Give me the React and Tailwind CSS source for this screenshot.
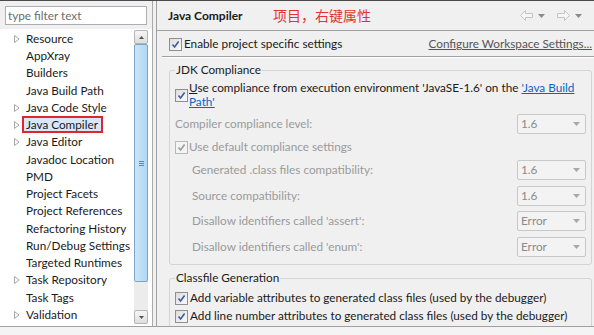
import React from "react";

const FONT = { fontFamily: 'Lato, "Noto Sans CJK SC", sans-serif' };

function Arrow() {
  return (
    <svg width="6" height="8" viewBox="0 0 6 8" className="shrink-0">
      <polygon points="0.5,0.5 5,4 0.5,7.5" fill="#fff" stroke="#a6a6a6" strokeWidth="1" />
    </svg>
  );
}

function Check({ disabled }) {
  return (
    <span
      className={`inline-flex items-center justify-center w-[13px] h-[13px] shrink-0 border ${
        disabled ? "border-[#b8b8b8] bg-[#f4f4f4]" : "border-[#8e8f8f] bg-gradient-to-br from-[#dcdcdc] to-[#fbfbfb]"
      }`}
    >
      <svg width="9" height="9" viewBox="0 0 9 9">
        <path
          d="M1.5 4.5 L3.6 7 L7.6 1.5"
          fill="none"
          stroke={disabled ? "#9a9a9a" : "#3a5ba8"}
          strokeWidth="1.6"
        />
      </svg>
    </span>
  );
}

function Combo({ value }) {
  return (
    <div className="w-[69px] h-[20px] shrink-0 border border-[#c8c8c8] rounded-[2px] bg-[#f3f3f3] flex items-center justify-between pl-[3px] pr-[5px] text-[#8a8a8a]">
      <span>{value}</span>
      <svg width="7" height="4" viewBox="0 0 7 4">
        <polygon points="0,0 7,0 3.5,4" fill="#a8a8a8" />
      </svg>
    </div>
  );
}

const tree = [
  ["Resource", true],
  ["AppXray", false],
  ["Builders", false],
  ["Java Build Path", false],
  ["Java Code Style", true],
  ["Java Compiler", true, true],
  ["Java Editor", true],
  ["Javadoc Location", false],
  ["PMD", false],
  ["Project Facets", false],
  ["Project References", false],
  ["Refactoring History", false],
  ["Run/Debug Settings", false],
  ["Targeted Runtimes", false],
  ["Task Repository", true],
  ["Task Tags", false],
  ["Validation", true],
];

function NavArrow({ dir }) {
  return (
    <svg width="13" height="11" viewBox="0 0 13 11">
      <path
        d={dir === "left" ? "M0.5 5.5 L5.5 0.5 L5.5 3.5 L12.5 3.5 L12.5 7.5 L5.5 7.5 L5.5 10.5 Z" : "M12.5 5.5 L7.5 0.5 L7.5 3.5 L0.5 3.5 L0.5 7.5 L7.5 7.5 L7.5 10.5 Z"}
        fill="#f6f6f6"
        stroke="#c4c4c4"
      />
    </svg>
  );
}

function Drop({ color = "#8a8a8a" }) {
  return (
    <svg width="7" height="4" viewBox="0 0 7 4">
      <polygon points="0,0 7,0 3.5,4" fill={color} />
    </svg>
  );
}

export default function App() {
  return (
    <div
      className="w-[594px] h-[335px] overflow-hidden bg-[#f0f0f0] border-t border-[#4a4a4a] flex flex-col text-[11.75px] text-[#1a1a1a] whitespace-nowrap"
      style={FONT}
    >
      <div className="flex h-[325px] shrink-0">
        {/* Left panel */}
        <div className="w-[153px] border-r border-[#a9a9a9] flex flex-col bg-white">
          <div className="bg-[#f0f0f0] pt-[5px] pl-[5px] pb-[4px] shrink-0">
            <div className="w-[142px] h-[19px] border border-[#abadb3] bg-white flex items-center pl-[2px] text-[#6d6d6d] leading-none">
              type filter text
            </div>
          </div>
          <div className="flex flex-1 bg-white">
            <div className="flex-1 pt-[1px]">
              {tree.map(([name, arrow, sel]) => (
                <div key={name} className="h-[17.25px] flex items-center pl-[14px]">
                  <span className="w-[8px] flex">{arrow ? <Arrow /> : null}</span>
                  {sel ? (
                    <span className="h-[17px] border-2 border-[#e0262b] bg-[#d8e8fa] flex items-center pl-[2px] pr-[3px] leading-none">
                      {name}
                    </span>
                  ) : (
                    <span className="pl-[4px] leading-none">{name}</span>
                  )}
                </div>
              ))}
            </div>
            <div className="w-[14px] mr-[4px] mt-[1px] mb-[2px] bg-[#ececec] flex flex-col">
              <div className="h-[14px] shrink-0 border border-[#b5b5b5] rounded-[2px] bg-gradient-to-b from-[#f6f6f6] to-[#dedede] flex items-center justify-center">
                <svg width="5" height="3" viewBox="0 0 5 3"><polygon points="0,3 5,3 2.5,0" fill="#555" /></svg>
              </div>
              <div className="h-[238px] shrink-0 border border-[#7fa5c6] rounded-[2px] bg-gradient-to-r from-[#c9e5f8] to-[#b0d8f4] flex items-center justify-center">
                <div className="flex flex-col gap-[1px]">
                  <div className="w-[5px] h-[1px] bg-[#5b87ad]" />
                  <div className="w-[5px] h-[1px] bg-[#5b87ad]" />
                  <div className="w-[5px] h-[1px] bg-[#5b87ad]" />
                </div>
              </div>
              <div className="flex-1" />
              <div className="h-[14px] shrink-0 border border-[#b5b5b5] rounded-[2px] bg-gradient-to-b from-[#f6f6f6] to-[#dedede] flex items-center justify-center">
                <svg width="5" height="3" viewBox="0 0 5 3"><polygon points="0,0 5,0 2.5,3" fill="#555" /></svg>
              </div>
            </div>
          </div>
        </div>
        {/* sash */}
        <div className="w-[3px]" />
        {/* Right panel */}
        <div className="flex-1 min-w-0 overflow-hidden border-l border-[#a0a0a0] flex flex-col">
          <div className="h-[30px] shrink-0 border-b border-[#a0a0a0] flex items-center pl-[11px] pr-[2px]">
            <span className="font-bold text-[12px] w-[105px]">Java Compiler</span>
            <span className="text-[14px] text-[#e03434]" style={{ fontFamily: '"Noto Sans CJK SC", sans-serif' }}>
              项目，右键属性
            </span>
            <div className="ml-auto flex items-center gap-[5px]">
              <NavArrow dir="left" />
              <Drop />
              <span className="w-[2px]" />
              <NavArrow dir="right" />
              <Drop />
              <span className="w-[5px]" />
            </div>
          </div>
          <div className="flex items-center h-[16px] shrink-0 mt-[5px] pl-[12px] pr-[2px]">
            <Check />
            <span className="ml-[2px]">Enable project specific settings</span>
            <span className="ml-auto underline text-[#555]">Configure Workspace Settings...</span>
          </div>
          <div className="h-[1px] shrink-0 bg-[#a0a0a0] ml-[5px] mt-[4px]" />
          <div className="h-[1px] shrink-0 bg-white ml-[5px]" />

          <fieldset className="shrink-0 ml-[12px] mr-[2px] mt-[5px] border border-[#d4d4d4] rounded-[3px] px-[5px] pb-[7px] min-w-0">
            <legend className="px-[1px] ml-[0px] leading-[14px]">JDK Compliance</legend>
            <div className="flex items-center mt-[4px]">
              <Check />
              <div className="ml-[1px]">
                <div className="leading-[14px]">
                  <span className="underline decoration-[#1a1a1a]">U</span>se compliance from execution environment 'JavaSE-1.6' on the{" "}
                  <span className="text-[#0b63c4] underline">'Java Build</span>
                </div>
                <div className="leading-[14px] text-[#0b63c4] underline">Path'</div>
              </div>
            </div>
            <div className="flex items-center justify-between h-[20px] mt-[5px] text-[#9a9a9a]">
              <span>Compiler compliance level:</span>
              <Combo value="1.6" />
            </div>
            <div className="flex items-center h-[16px] mt-[5px] text-[#9a9a9a]">
              <Check disabled />
              <span className="ml-[1px]">Use default compliance settings</span>
            </div>
            <div className="flex items-center justify-between h-[20px] mt-[5px] pl-[17px] text-[#9a9a9a]">
              <span>Generated .class files compatibility:</span>
              <Combo value="1.6" />
            </div>
            <div className="flex items-center justify-between h-[20px] mt-[6px] pl-[17px] text-[#9a9a9a]">
              <span>Source compatibility:</span>
              <Combo value="1.6" />
            </div>
            <div className="flex items-center justify-between h-[20px] mt-[5px] pl-[17px] text-[#9a9a9a]">
              <span>Disallow identifiers called 'assert':</span>
              <Combo value="Error" />
            </div>
            <div className="flex items-center justify-between h-[20px] mt-[6px] pl-[17px] text-[#9a9a9a]">
              <span>Disallow identifiers called 'enum':</span>
              <Combo value="Error" />
            </div>
          </fieldset>

          <fieldset className="shrink-0 ml-[12px] mr-[2px] mt-[6px] border border-[#d4d4d4] rounded-[3px] px-[5px] pb-[5px] min-w-0">
            <legend className="px-[1px] leading-[14px]">Classfile Generation</legend>
            <div className="flex items-center h-[16px] mt-[5px]">
              <Check />
              <span className="ml-[2px]">Add variable attributes to generated class files (used by the debugger)</span>
            </div>
            <div className="flex items-center h-[16px] mt-[2px]">
              <Check />
              <span className="ml-[2px]">Add line number attributes to generated class files (used by the debugger)</span>
            </div>
          </fieldset>
        </div>
      </div>
      <div className="flex-1 border-t border-[#a0a0a0] bg-[#f4f4f4]" />
    </div>
  );
}
